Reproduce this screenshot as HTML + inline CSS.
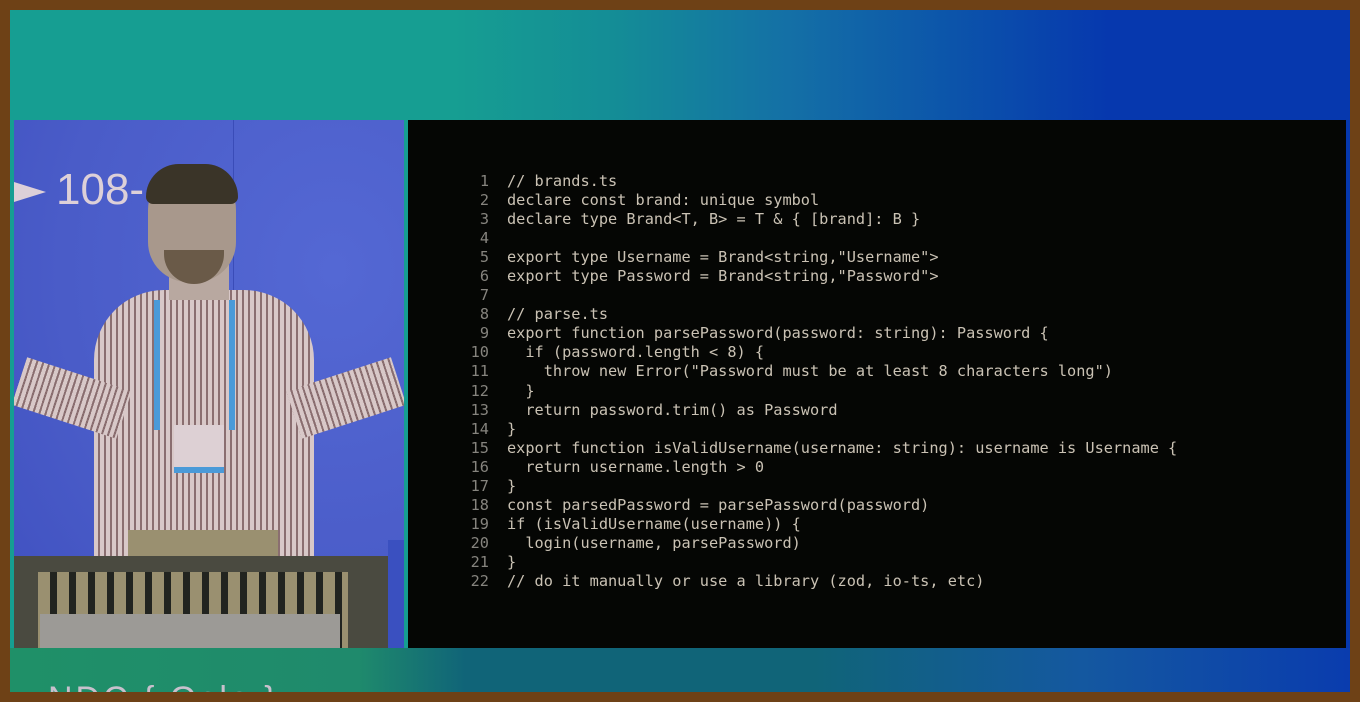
<!DOCTYPE html>
<html><head><meta charset="utf-8"><style>
html,body{margin:0;padding:0;width:1360px;height:702px;overflow:hidden}
body{background:#6e4116;position:relative}
.stage{position:absolute;left:10px;top:10px;width:1340px;height:682px;
background:linear-gradient(90deg,#169e92 0%,#169e92 33%,#148d96 45%,#1470a6 58%,#0c55aa 70%,#0638ae 82%,#0638ae 100%)}
.bot{position:absolute;left:10px;top:648px;width:1340px;height:44px;overflow:hidden;
background:linear-gradient(90deg,#1f9068 0%,#1f8a6c 26%,#106478 34%,#106478 60%,#1458a0 80%,#0a3cae 100%)}
.video{position:absolute;left:14px;top:120px;width:390px;height:528px;background:#4a5cc8;overflow:hidden}
.code{position:absolute;left:408px;top:120px;width:938px;height:528px;background:#050604}
pre{position:absolute;margin:0;top:172px;font-family:"DejaVu Sans Mono","Liberation Mono",monospace;font-size:15.25px;line-height:19.05px;}
.nums{left:460px;width:29px;text-align:right;color:#86847e}
.src{left:507px;color:#cac2b4}
.ndc{position:absolute;left:38px;top:32px;font-family:"Liberation Sans",sans-serif;font-size:34px;color:#c8c0cc;letter-spacing:3px;white-space:nowrap}
</style></head><body>
<div class="stage"></div>
<div class="bot"><div class="ndc">NDC { Oslo }</div></div>
<div class="video">
  <div style="position:absolute;left:0;top:0;width:390px;height:528px;background:radial-gradient(ellipse at 320px 150px,#5468d4 0%,#4a5cc8 60%,#3f50c0 100%)"></div>
  <div style="position:absolute;left:219px;top:0;width:1px;height:330px;background:#3a4cb8"></div>
  <div style="position:absolute;left:0;top:62px;width:0;height:0;border-top:10px solid transparent;border-bottom:10px solid transparent;border-left:32px solid #ddd0d8"></div>
  <div style="position:absolute;left:42px;top:48px;font-family:'Liberation Sans',sans-serif;font-size:44px;color:#ddd0d8;line-height:1">108-</div>
  <div style="position:absolute;left:80px;top:170px;width:220px;height:330px;border-radius:70px 70px 0 0;background:repeating-linear-gradient(90deg,#d8c8c8 0 4px,#8a6e70 4px 6px)"></div>
  <div style="position:absolute;left:0;top:270px;width:110px;height:50px;transform:rotate(18deg);transform-origin:right center;background:repeating-linear-gradient(90deg,#d8c8c8 0 4px,#8a6e70 4px 6px)"></div>
  <div style="position:absolute;left:280px;top:270px;width:110px;height:50px;transform:rotate(-18deg);transform-origin:left center;background:repeating-linear-gradient(90deg,#d8c8c8 0 4px,#8a6e70 4px 6px)"></div>
  <div style="position:absolute;left:155px;top:130px;width:60px;height:50px;background:#b8a8a0"></div>
  <div style="position:absolute;left:134px;top:46px;width:88px;height:116px;border-radius:44px 44px 40px 40px;background:#a8988c"></div>
  <div style="position:absolute;left:132px;top:44px;width:92px;height:40px;border-radius:46px 46px 10px 10px;background:#3a3428"></div>
  <div style="position:absolute;left:150px;top:130px;width:60px;height:34px;border-radius:0 0 30px 30px;background:#6a5a48"></div>
  <div style="position:absolute;left:140px;top:180px;width:6px;height:130px;background:#4a9ad8"></div>
  <div style="position:absolute;left:215px;top:180px;width:6px;height:130px;background:#4a9ad8"></div>
  <div style="position:absolute;left:160px;top:305px;width:50px;height:42px;background:#ddd0d4;border-bottom:6px solid #4a9ad8"></div>
  <div style="position:absolute;left:114px;top:410px;width:150px;height:32px;background:#9a9070"></div>
  <div style="position:absolute;left:0;top:436px;width:390px;height:92px;background:#4a4a40"></div>
  <div style="position:absolute;left:24px;top:452px;width:310px;height:76px;background:repeating-linear-gradient(90deg,#9a9070 0 12px,#222420 12px 19px)"></div>
  <div style="position:absolute;left:26px;top:494px;width:300px;height:34px;background:#9c9a96"></div>
  <div style="position:absolute;left:374px;top:420px;width:16px;height:108px;background:#3a50c0"></div>
</div>
<div class="code"></div>
<pre class="nums">1
2
3
4
5
6
7
8
9
10
11
12
13
14
15
16
17
18
19
20
21
22</pre>
<pre class="src">// brands.ts
declare const brand: unique symbol
declare type Brand&lt;T, B&gt; = T &amp; { [brand]: B }

export type Username = Brand&lt;string,"Username"&gt;
export type Password = Brand&lt;string,"Password"&gt;

// parse.ts
export function parsePassword(password: string): Password {
  if (password.length &lt; 8) {
    throw new Error("Password must be at least 8 characters long")
  }
  return password.trim() as Password
}
export function isValidUsername(username: string): username is Username {
  return username.length &gt; 0
}
const parsedPassword = parsePassword(password)
if (isValidUsername(username)) {
  login(username, parsePassword)
}
// do it manually or use a library (zod, io-ts, etc)</pre>
</body></html>
